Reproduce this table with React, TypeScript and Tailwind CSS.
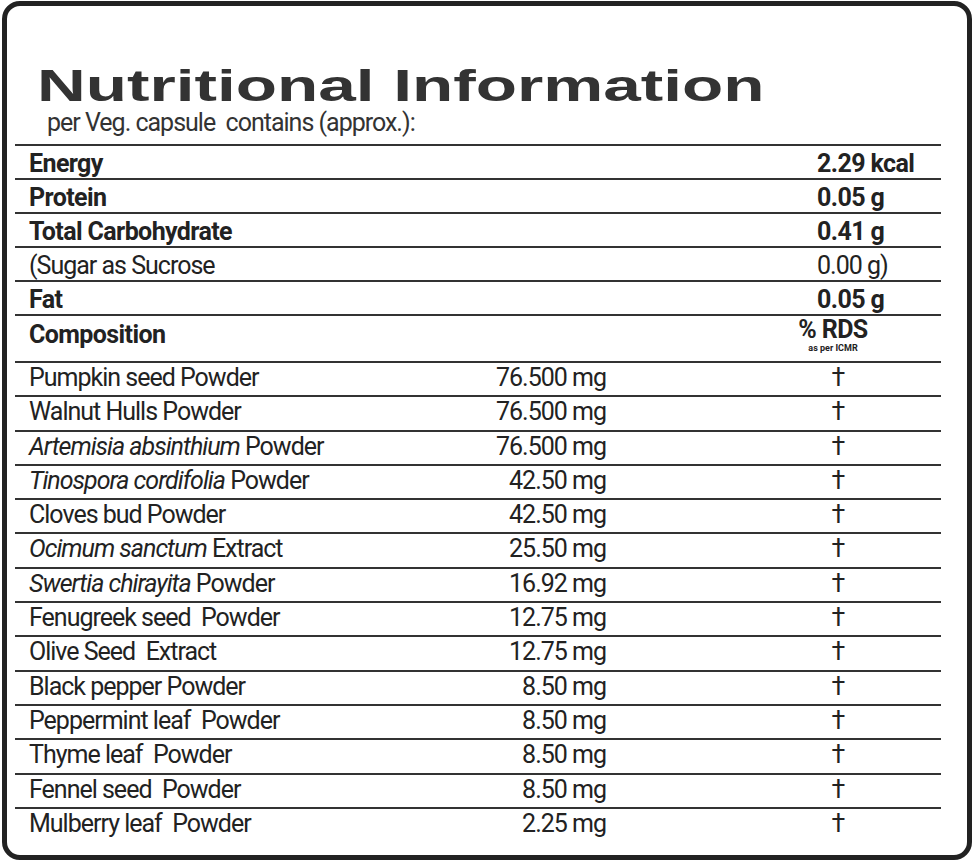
const body = "font-['Roboto','Liberation_Sans',sans-serif]";

type Nutrient = { label: string; value: string; bold: boolean };

const nutrients: Nutrient[] = [
  { label: "Energy", value: "2.29 kcal", bold: true },
  { label: "Protein", value: "0.05 g", bold: true },
  { label: "Total Carbohydrate", value: "0.41 g", bold: true },
  { label: "(Sugar as Sucrose", value: "0.00 g)", bold: false },
  { label: "Fat", value: "0.05 g", bold: true },
];

type Ingredient = { italic?: string; rest: string; amount: string };

const ingredients: Ingredient[] = [
  { rest: "Pumpkin seed Powder", amount: "76.500 mg" },
  { rest: "Walnut Hulls Powder", amount: "76.500 mg" },
  { italic: "Artemisia absinthium", rest: " Powder", amount: "76.500 mg" },
  { italic: "Tinospora cordifolia", rest: " Powder", amount: "42.50 mg" },
  { rest: "Cloves bud Powder", amount: "42.50 mg" },
  { italic: "Ocimum sanctum", rest: " Extract", amount: "25.50 mg" },
  { italic: "Swertia chirayita", rest: " Powder", amount: "16.92 mg" },
  { rest: "Fenugreek seed  Powder", amount: "12.75 mg" },
  { rest: "Olive Seed  Extract", amount: "12.75 mg" },
  { rest: "Black pepper Powder", amount: "8.50 mg" },
  { rest: "Peppermint leaf  Powder", amount: "8.50 mg" },
  { rest: "Thyme leaf  Powder", amount: "8.50 mg" },
  { rest: "Fennel seed  Powder", amount: "8.50 mg" },
  { rest: "Mulberry leaf  Powder", amount: "2.25 mg" },
];

export default function App() {
  return (
    <div className="w-[974px] h-[863px] bg-white pl-[2px] pt-[1px]">
      <div className={`w-[970px] h-[859px] border-[5px] border-[#222] rounded-[18px] pl-[8px] text-[#222] ${body}`}>
        {/* Header */}
        <div className="h-[138px] pt-[58px]">
          <div className="h-[46px] pl-[22px]">
            <div className="w-fit origin-left scale-x-[1.5] font-['Liberation_Sans',Arial,sans-serif] font-bold text-[45px] leading-[44px] text-[#333] whitespace-nowrap">
              Nutritional Information
            </div>
          </div>
          <div className="pl-[32px] text-[25px] leading-[26px] tracking-[-1px] whitespace-pre text-[#333]">
            per Veg. capsule  contains (approx.):
          </div>
        </div>

        {/* Table */}
        <div className="w-[926px] text-[25px]">
          {nutrients.map((n) => (
            <div
              key={n.label}
              className={`flex h-[34px] border-t-2 border-[#333] pl-[14px] pt-[4px] leading-[28px] whitespace-pre ${n.bold ? "font-bold tracking-[-0.6px]" : "tracking-[-1px]"}`}
            >
              <div className="w-[788px]">{n.label}</div>
              <div>{n.value}</div>
            </div>
          ))}

          <div className="flex h-[47px] border-t-2 border-[#333] pl-[14px] tracking-[-0.6px]">
            <div className="w-[768px] pt-[5px] leading-[28px] font-bold">Composition</div>
            <div className="w-[72px] flex flex-col items-center font-bold whitespace-nowrap">
              <div className="text-[25px] leading-[25px] pt-[1px]">% RDS</div>
              <div className="text-[9px] leading-[12px] tracking-normal">as per ICMR</div>
            </div>
          </div>

          {ingredients.map((ing, i) => (
            <div
              key={i}
              className="flex h-[34.3px] border-t-2 border-[#333] pl-[14px] pt-[1px] leading-[28px] tracking-[-1px] whitespace-pre"
            >
              <div className="w-[430px]">
                {ing.italic && <span className="italic">{ing.italic}</span>}
                {ing.rest}
              </div>
              <div className="w-[147px] text-right">{ing.amount}</div>
              <div className="ml-[211px] w-[42px] text-center">†</div>
            </div>
          ))}
        </div>
      </div>
    </div>
  );
}
